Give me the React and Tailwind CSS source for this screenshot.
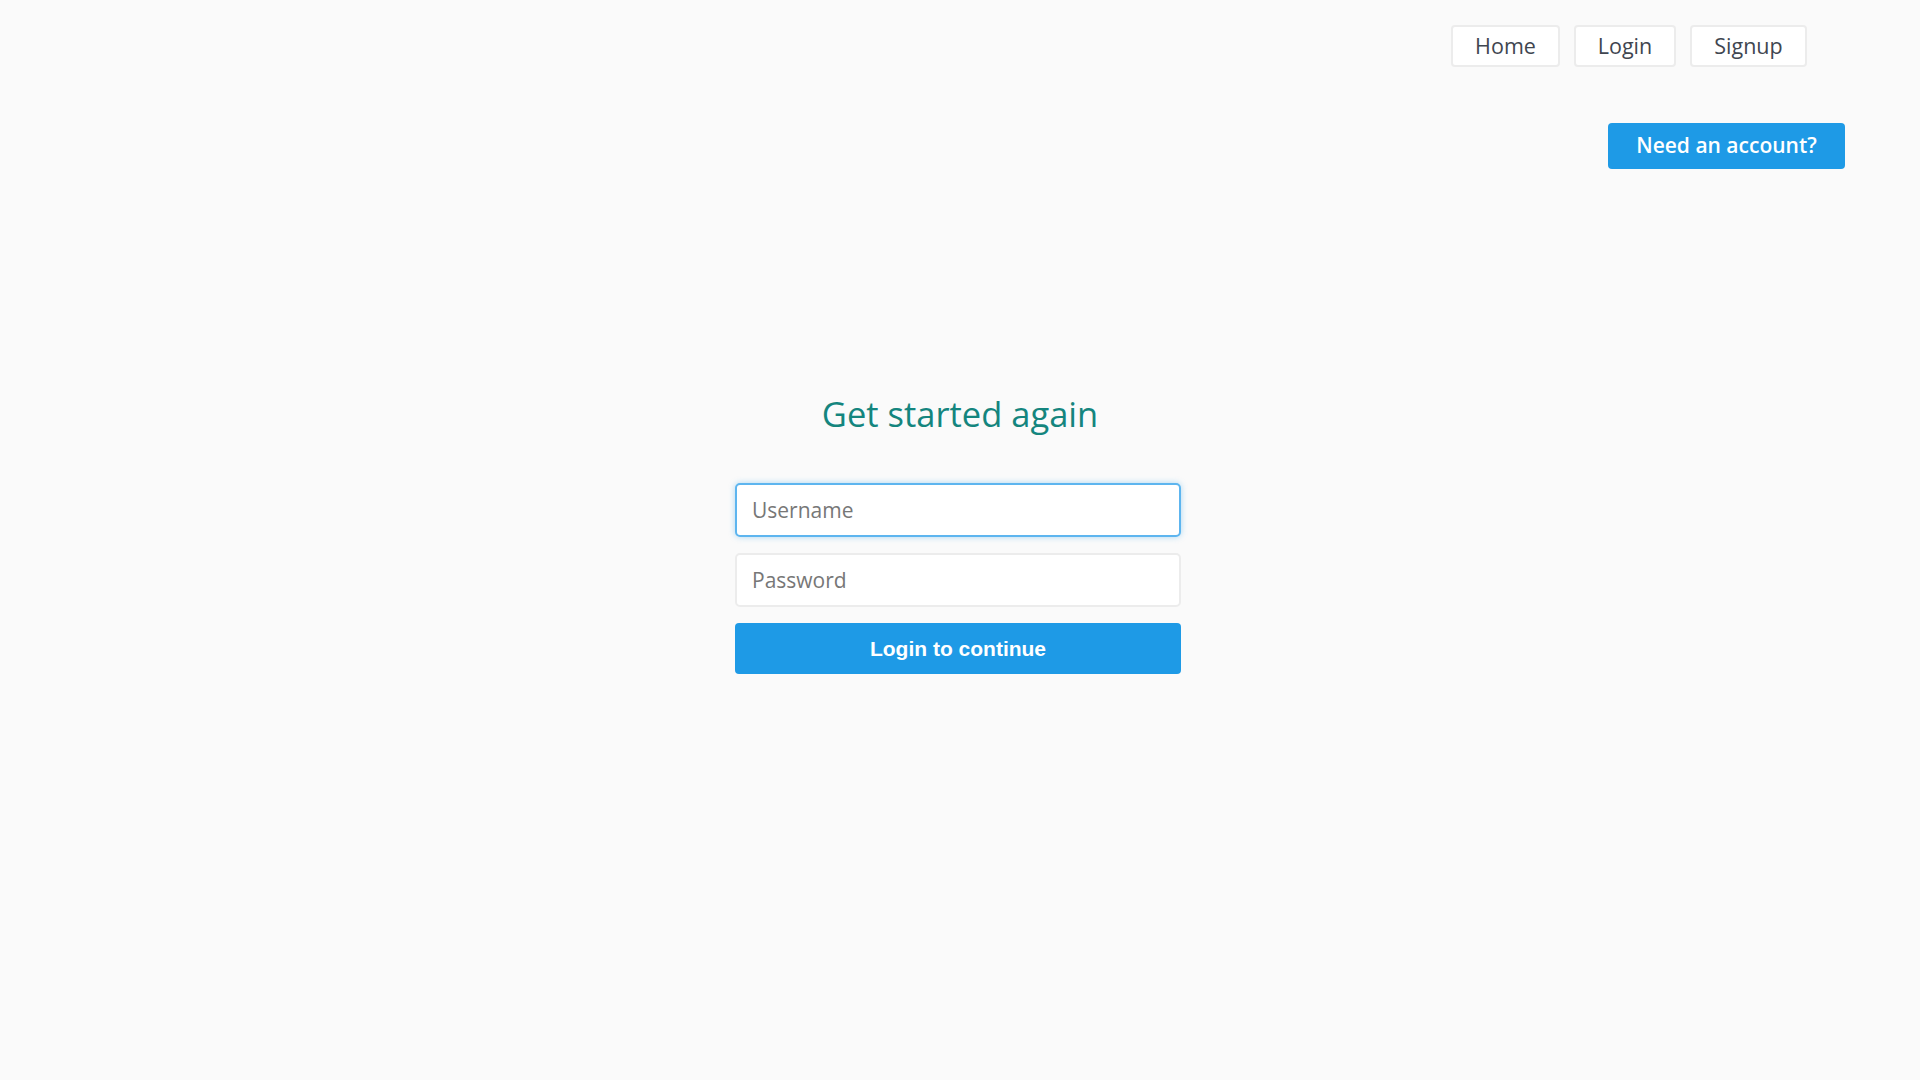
export default function App() {
  const os = { fontFamily: '"Open Sans", "Noto Sans", sans-serif' };
  return (
    <div className="min-h-[1080px] w-full bg-[#fafafa]" style={os}>
      <nav className="flex justify-end gap-[14px] pt-[25px] pr-[113px]">
        {[
          ["Home", "w-[109px]"],
          ["Login", "w-[102px]"],
          ["Signup", "w-[117px]"],
        ].map(([t, w]) => (
          <a
            key={t}
            className={`${w} flex h-[42px] items-center justify-center rounded-[4px] border-2 border-[#ececec] bg-white text-[21.5px] text-[#3f4650]`}
          >
            {t}
          </a>
        ))}
      </nav>
      <div className="flex justify-end pr-[75px] pt-[56px]">
        <button className="flex h-[46px] w-[237px] items-center justify-center rounded-[4px] bg-[#1e9ae6] text-[21px] font-semibold text-white">
          Need an account?
        </button>
      </div>
      <h1 className="mt-[222px] text-center text-[34.5px] leading-[46px] text-[#14857e]">
        Get started again
      </h1>
      <div className="mt-[46px] flex justify-center pr-[4px]">
        <form className="flex w-[446px] flex-col gap-[16px]">
          <input
            placeholder="Username"
            className="h-[54px] w-full rounded-[5px] border-2 border-[#5db5ef] bg-white px-[15px] text-[21px] text-[#444] shadow-[0_0_6px_rgba(30,154,230,0.35)] outline-none placeholder:text-[#777]"
            style={os}
          />
          <input
            placeholder="Password"
            type="password"
            className="h-[54px] w-full rounded-[5px] border-2 border-[#ececec] bg-white px-[15px] text-[21px] text-[#444] outline-none placeholder:text-[#777]"
            style={os}
          />
          <button
            type="button"
            className="h-[51px] w-full rounded-[4px] bg-[#1e9ae6] text-[21px] font-bold text-white"
            style={{ fontFamily: '"Liberation Sans", Arial, sans-serif' }}
          >
            Login to continue
          </button>
        </form>
      </div>
    </div>
  );
}
